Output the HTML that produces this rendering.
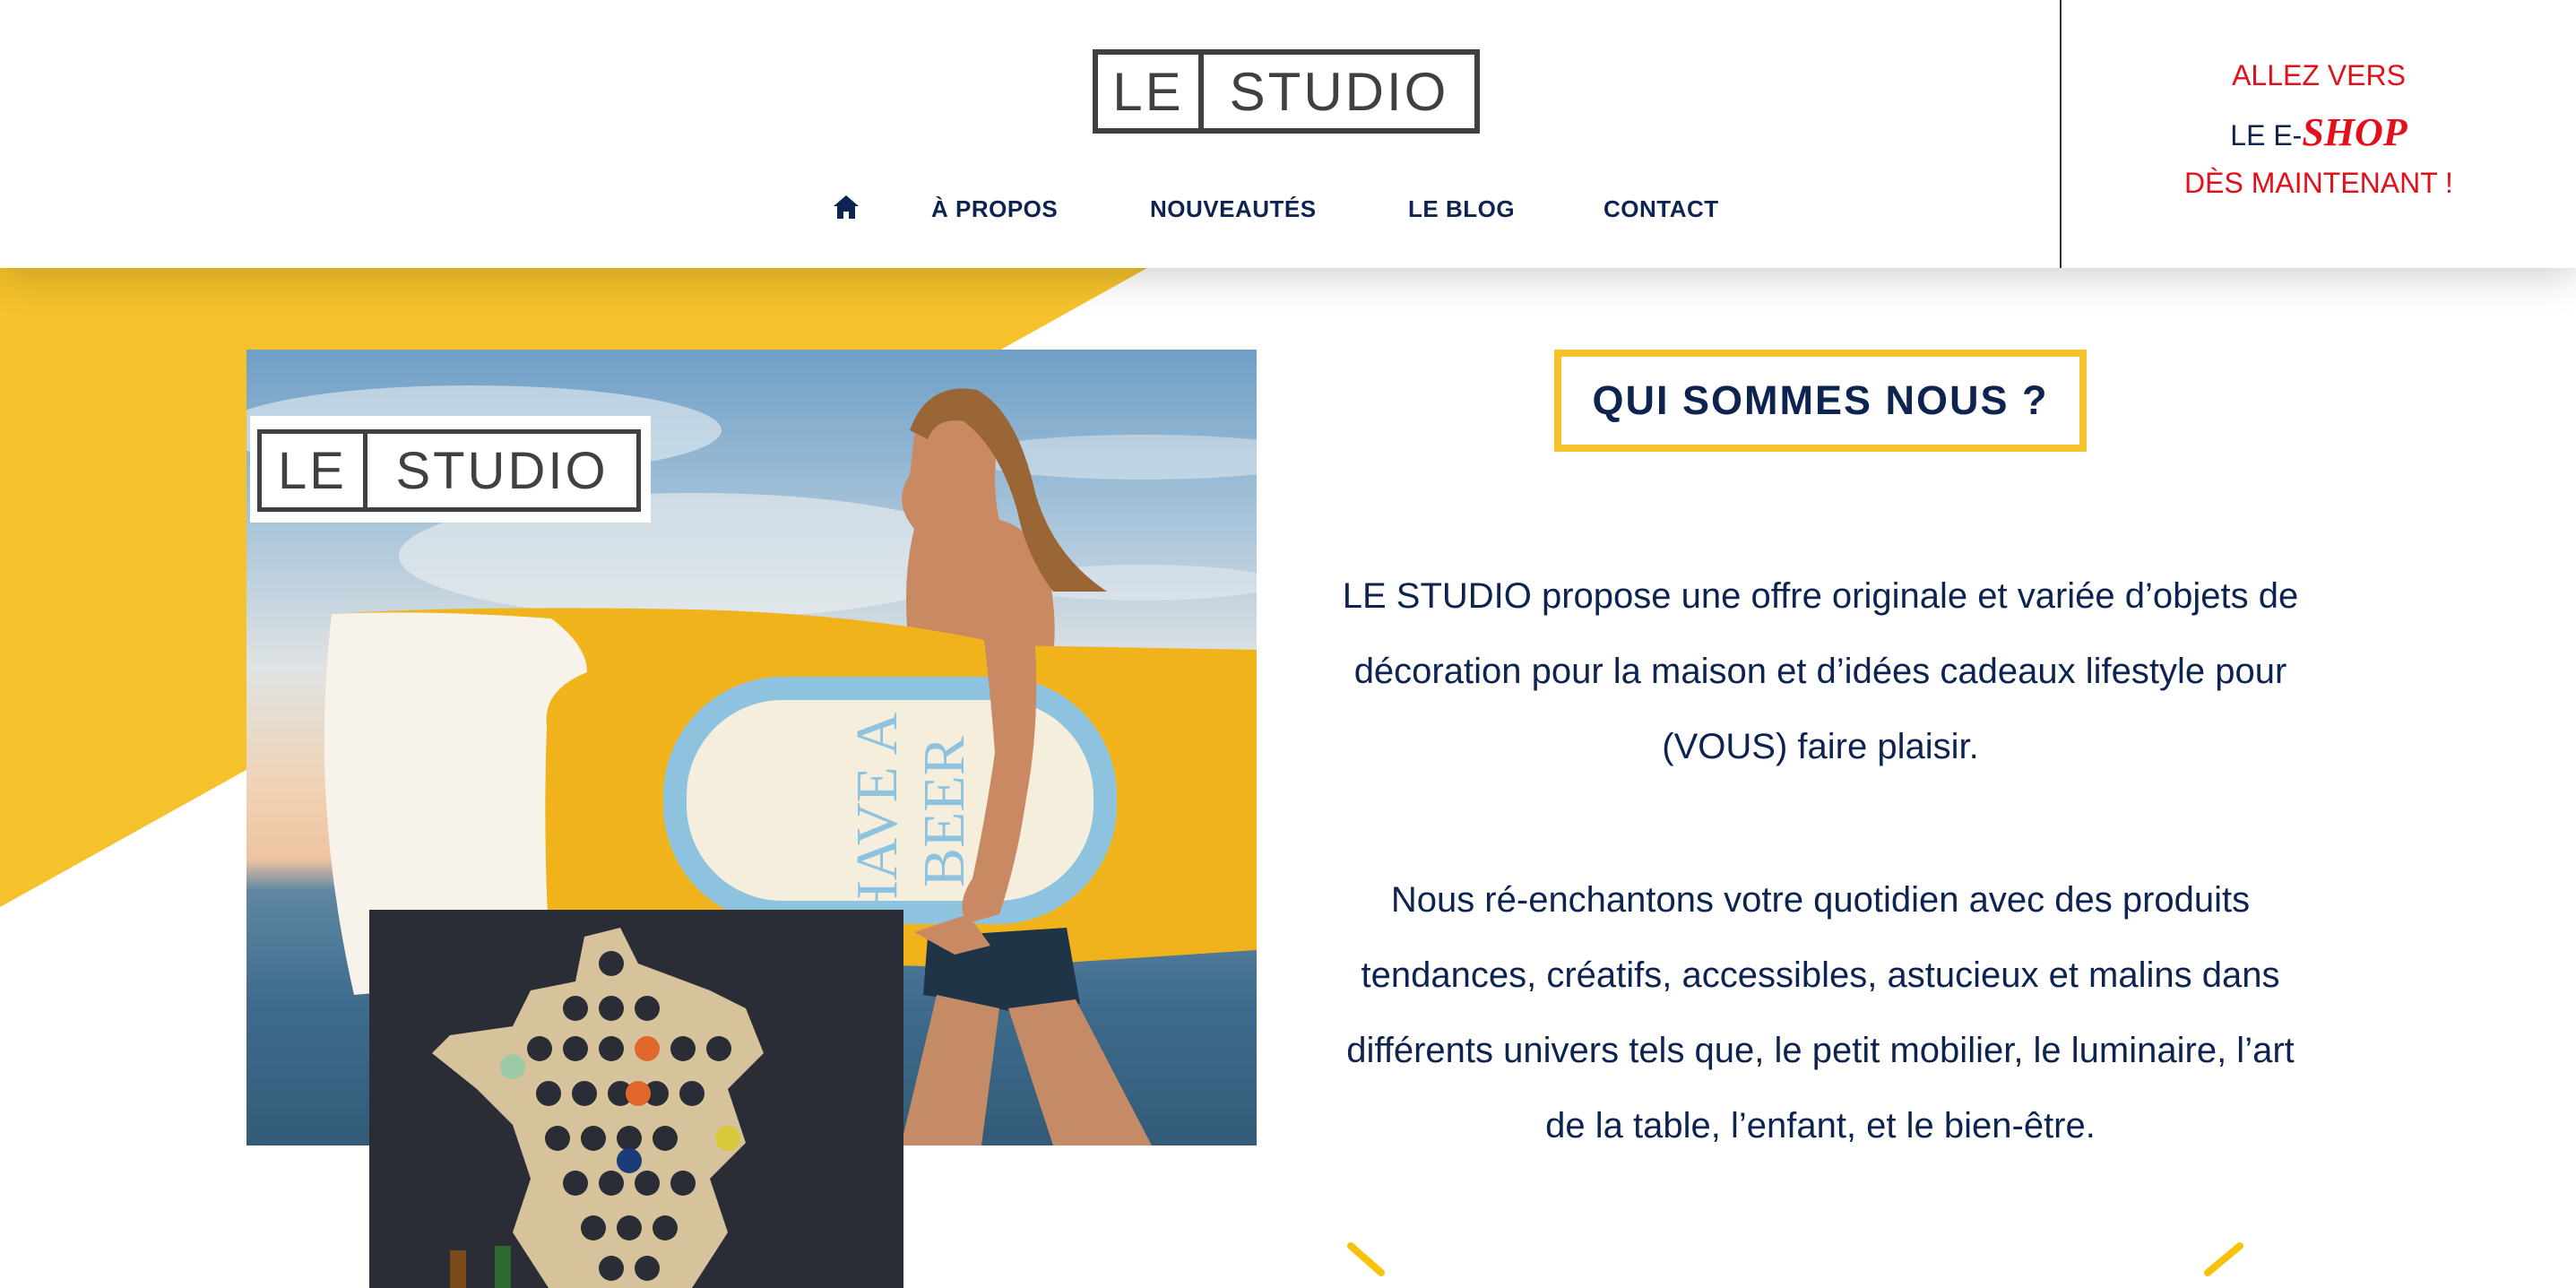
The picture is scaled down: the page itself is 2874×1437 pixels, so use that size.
<!DOCTYPE html>
<html><head><meta charset="utf-8">
<style>
*{margin:0;padding:0;box-sizing:border-box}
html,body{width:2874px;height:1437px;overflow:hidden;background:#fff;font-family:"Liberation Sans",sans-serif;color:#0d2350}
.hdr{position:absolute;left:0;top:0;width:2874px;height:299px;background:#fff;z-index:5;box-shadow:0 10px 40px rgba(0,0,0,.18)}
.vline{position:absolute;left:2298px;top:0;width:2px;height:299px;background:#333}
.logo{position:absolute;left:1219px;top:55px;width:432px;height:94px;border:6px solid #404040;display:flex;align-items:center;font-size:60px;color:#404040;letter-spacing:3px}
.logo .le{width:118px;height:100%;border-right:6px solid #404040;display:flex;align-items:center;justify-content:center}
.logo .st{flex:1;text-align:center}
.nav{position:absolute;top:218px;font-size:26px;font-weight:bold;color:#0d2350;letter-spacing:.5px}
.eshop{position:absolute;left:2300px;width:574px;text-align:center;font-size:32px;color:#e3101b}
.yel{position:absolute;left:0;top:299px;width:1280px;height:720px;background:#f5c22b;clip-path:polygon(0 0,1280px 0,0 713px)}
.photo{position:absolute;left:275px;top:390px;width:1127px;height:888px;overflow:hidden;
background:linear-gradient(180deg,#6f9fc6 0%,#a9c5da 22%,#dfe3e4 40%,#f0d2b4 55%,#eec4a0 64%,#5f87a3 68%,#3f6c8d 82%,#335b78 100%)}
.map{position:absolute;left:412px;top:1015px;width:596px;height:422px;background:#2b2d36;overflow:hidden}
.qbox{position:absolute;left:1734px;top:390px;width:594px;height:114px;border:8px solid #f5c22b;display:flex;align-items:center;justify-content:center;font-size:45px;font-weight:bold;letter-spacing:2px;color:#0d2350}
.txt{position:absolute;left:1400px;width:1262px;text-align:center;font-size:40px;line-height:84px;color:#0d2350}
</style></head><body>
<div class="yel"></div>
<div class="hdr">
  <div class="logo"><div class="le">LE</div><div class="st">STUDIO</div></div>
  <svg class="nav" style="left:928px;top:216px" width="32" height="30" viewBox="0 0 32 30"><path d="M16 2 L2 14 H6 V28 H13 V20 H19 V28 H26 V14 H30 Z" fill="#0d2350"/></svg>
  <div class="nav" style="left:1039px">À PROPOS</div>
  <div class="nav" style="left:1283px">NOUVEAUTÉS</div>
  <div class="nav" style="left:1571px">LE BLOG</div>
  <div class="nav" style="left:1789px">CONTACT</div>
  <div class="vline"></div>
  <div class="eshop" style="top:66px">ALLEZ VERS</div>
  <div class="eshop" style="top:122px"><span style="color:#0d2350">LE E-</span><span style="font-style:italic;font-weight:bold;font-size:44px;font-family:'Liberation Serif',serif">SHOP</span></div>
  <div class="eshop" style="top:186px">DÈS MAINTENANT !</div>
</div>

<div class="photo">
  <svg width="1127" height="888" viewBox="0 0 1127 888" style="position:absolute;left:0;top:0">
    <ellipse cx="250" cy="90" rx="280" ry="50" fill="#e8eef2" opacity=".6"/>
    <ellipse cx="500" cy="230" rx="330" ry="70" fill="#eef0f0" opacity=".6"/>
    <ellipse cx="1000" cy="120" rx="200" ry="25" fill="#e8eef2" opacity=".5"/>
    <ellipse cx="1000" cy="260" rx="150" ry="20" fill="#e8eef2" opacity=".5"/>
    <!-- torso/head behind float -->
    <path d="M745 95 Q760 55 810 60 Q840 80 835 140 Q835 170 840 190 Q880 200 895 250 Q905 300 900 340 L740 340 Q730 260 745 200 Q720 170 740 140Z" fill="#c98a63"/>
    <path d="M740 90 Q760 35 815 45 Q860 70 880 160 Q900 230 960 270 L900 270 Q870 230 860 180 Q840 110 800 80 Q770 75 760 100Z" fill="#9a6636"/>
    <!-- float -->
    <path d="M95 295 Q250 285 500 290 Q700 295 850 330 L1127 335 L1127 670 L820 690 L500 680 L120 700 Q70 500 95 295Z" fill="#f1b31c"/>
    <path d="M95 295 Q200 290 340 300 Q380 330 380 360 Q330 380 335 420 Q330 560 340 700 L120 720 Q70 500 95 295Z" fill="#f7f2ea"/>
    <rect x="478" y="378" width="480" height="250" rx="120" fill="#f6eedc" stroke="#8ec3e0" stroke-width="26"/>
    <text x="0" y="0" font-family="Liberation Serif" font-size="66" fill="#8ec3e0" transform="translate(725 640) rotate(-90)">HAVE A</text>
    <text x="0" y="0" font-family="Liberation Serif" font-size="66" fill="#8ec3e0" transform="translate(800 600) rotate(-90)">BEER</text>
    <!-- shorts & legs -->
    <path d="M760 655 L915 645 L930 730 L860 740 L790 725 L755 720Z" fill="#1f3446"/>
    <path d="M770 720 L840 735 L820 888 L730 888Z" fill="#c58a66"/>
    <path d="M850 735 L925 725 L1010 888 L900 888Z" fill="#c58a66"/>
    <!-- arm -->
    <path d="M840 230 Q880 260 880 330 Q885 420 870 500 Q860 570 840 630 L805 640 Q790 620 810 590 Q825 520 835 450 Q830 380 820 300Z" fill="#c98a63"/>
    <path d="M745 650 L805 630 L830 665 L790 675Z" fill="#c98a63"/>
  </svg>
  <div style="position:absolute;left:4px;top:74px;width:447px;height:119px;background:#fff">
    <div class="logo" style="position:absolute;left:8px;top:15px;width:428px;height:92px;border-width:5px;font-size:58px"><div class="le" style="border-right-width:5px">LE</div><div class="st">STUDIO</div></div>
  </div>
</div>

<div class="map">
  <svg width="596" height="422" viewBox="0 0 596 422">
    <path d="M240 30 L280 20 L300 60 L380 90 L420 110 L440 160 L400 200 L420 260 L380 300 L400 360 L360 422 L200 422 L160 360 L180 300 L160 240 L120 200 L70 160 L90 140 L160 130 L180 90 L230 80Z" fill="#d6c39b"/>
    <g fill="#2b2d36">
      <circle cx="270" cy="60" r="14"/><circle cx="230" cy="110" r="14"/><circle cx="270" cy="110" r="14"/><circle cx="310" cy="110" r="14"/>
      <circle cx="190" cy="155" r="14"/><circle cx="230" cy="155" r="14"/><circle cx="270" cy="155" r="14"/><circle cx="350" cy="155" r="14"/><circle cx="390" cy="155" r="14"/>
      <circle cx="200" cy="205" r="14"/><circle cx="240" cy="205" r="14"/><circle cx="280" cy="205" r="14"/><circle cx="320" cy="205" r="14"/><circle cx="360" cy="205" r="14"/>
      <circle cx="210" cy="255" r="14"/><circle cx="250" cy="255" r="14"/><circle cx="290" cy="255" r="14"/><circle cx="330" cy="255" r="14"/>
      <circle cx="230" cy="305" r="14"/><circle cx="270" cy="305" r="14"/><circle cx="310" cy="305" r="14"/><circle cx="350" cy="305" r="14"/>
      <circle cx="250" cy="355" r="14"/><circle cx="290" cy="355" r="14"/><circle cx="330" cy="355" r="14"/>
      <circle cx="270" cy="400" r="14"/><circle cx="310" cy="400" r="14"/>
    </g>
    <g><circle cx="310" cy="155" r="14" fill="#e2672a"/><circle cx="160" cy="175" r="14" fill="#9cc9a6"/><circle cx="400" cy="255" r="14" fill="#d9c93a"/><circle cx="300" cy="205" r="14" fill="#e2672a"/><circle cx="290" cy="280" r="14" fill="#1c3b7a"/></g>
    <rect x="90" y="380" width="18" height="42" fill="#7a4a1a"/><rect x="140" y="375" width="18" height="47" fill="#2e6a2e"/>
  </svg>
</div>

<div class="qbox">QUI SOMMES NOUS ?</div>

<div class="txt" style="top:623px">LE STUDIO propose une offre originale et variée d’objets de<br>décoration pour la maison et d’idées cadeaux lifestyle pour<br>(VOUS) faire plaisir.</div>
<div class="txt" style="top:962px">Nous ré-enchantons votre quotidien avec des produits<br>tendances, créatifs, accessibles, astucieux et malins dans<br>différents univers tels que, le petit mobilier, le luminaire, l’art<br>de la table, l’enfant, et le bien-être.</div>

<svg style="position:absolute;left:0;top:0" width="2874" height="1437">
  <line x1="1507" y1="1390" x2="1541" y2="1420" stroke="#f9c20a" stroke-width="8" stroke-linecap="round"/>
  <line x1="2463" y1="1420" x2="2499" y2="1390" stroke="#f9c20a" stroke-width="8" stroke-linecap="round"/>
</svg>
</body></html>
